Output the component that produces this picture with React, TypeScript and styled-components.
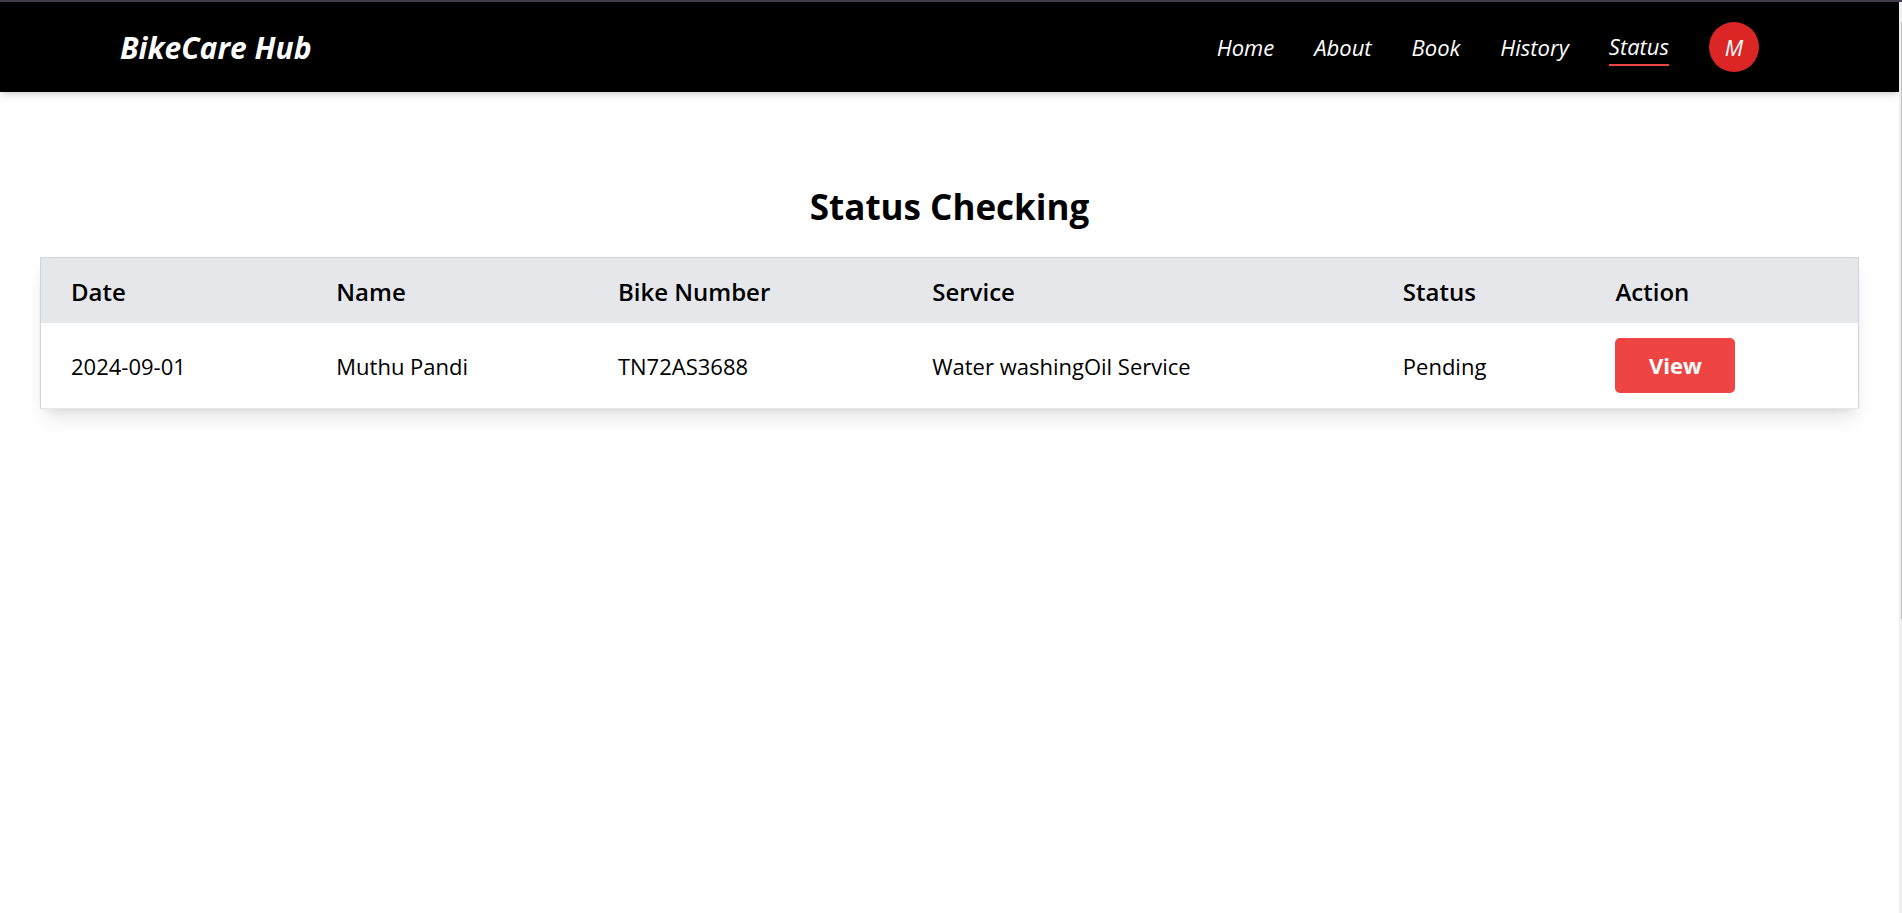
import React from "react";
import styled, { createGlobalStyle } from "styled-components";

const GlobalStyle = createGlobalStyle`
  *, *::before, *::after { box-sizing: border-box; }
  body {
    margin: 0;
    background: #ffffff;
    color: #000000;
    font-family: "Segoe UI", "Open Sans", "Noto Sans", sans-serif;
    font-size: 22px;
    line-height: 30px;
  }
`;

const Frame = styled.div`
  display: flex;
  min-height: 100vh;
  border-top: 2px solid #463c50;
`;

const Page = styled.div`
  flex: 1;
  min-width: 0;
`;

const ScrollTrack = styled.div`
  display: flex;
  justify-content: flex-end;
  width: 3px;
  padding-top: 20px;
  background: #f0f0f0;
`;

const ScrollThumb = styled.div`
  width: 1px;
  height: 67%;
  background: #c0c0c0;
`;

const Header = styled.header`
  display: flex;
  align-items: center;
  justify-content: space-between;
  height: 90px;
  padding: 0 140px 0 120px;
  background: #000000;
  color: #ffffff;
  font-style: italic;
  box-shadow: 0 5px 8px -1px rgba(0, 0, 0, 0.1), 0 3px 5px -2px rgba(0, 0, 0, 0.1);
`;

const Brand = styled.a`
  padding-top: 2px;
  color: inherit;
  font-size: 30px;
  font-weight: 700;
  line-height: 40px;
  text-decoration: none;
`;

const Nav = styled.nav`
  display: flex;
  align-items: center;
  gap: 40px;
`;

const NavLink = styled.a<{ $active?: boolean }>`
  color: inherit;
  line-height: 36px;
  text-decoration: none;
  border-bottom: ${(p) => (p.$active ? "2px solid #ef4444" : "0")};
`;

const Avatar = styled.button`
  width: 50px;
  height: 50px;
  padding: 0;
  border: 0;
  border-radius: 50%;
  background: #dc2626;
  color: #ffffff;
  font: inherit;
`;

const Main = styled.main`
  padding: 90px 40px;
`;

const Title = styled.h1`
  margin: 0 0 25px;
  font-size: 35px;
  font-weight: 700;
  line-height: 50px;
  text-align: center;
`;

const Table = styled.table`
  width: 100%;
  table-layout: fixed;
  border: 1px solid #d1d5db;
  border-bottom-color: #e5e7eb;
  border-spacing: 0;
  text-align: left;
  box-shadow: 0 12px 19px -4px rgba(0, 0, 0, 0.1), 0 5px 8px -5px rgba(0, 0, 0, 0.1);
`;

const Col = styled.col<{ $share: number }>`
  width: ${(p) => p.$share}%;
`;

const HeadCell = styled.th`
  height: 65px;
  padding: 2px 30px 0;
  background: #e5e7eb;
  font-size: 24px;
  font-weight: 600;
`;

const Cell = styled.td`
  padding: 15px 30px;
`;

const ViewButton = styled.button`
  display: block;
  width: 120px;
  height: 55px;
  padding: 0 0 2px;
  border: 0;
  border-radius: 5px;
  background: #ef4444;
  color: #ffffff;
  font: inherit;
  font-weight: 700;
`;

const links = ["Home", "About", "Book", "History", "Status"];

const columns = [
  { label: "Date", share: 14.6 },
  { label: "Name", share: 15.5 },
  { label: "Bike Number", share: 17.3 },
  { label: "Service", share: 25.9 },
  { label: "Status", share: 11.7 },
  { label: "Action", share: 15 },
];

const bookings = [
  {
    date: "2024-09-01",
    name: "Muthu Pandi",
    bike: "TN72AS3688",
    services: ["Water washing", "Oil Service"],
    status: "Pending",
  },
];

export default function App() {
  return (
    <Frame>
      <GlobalStyle />
      <Page>
        <Header>
          <Brand href="#">BikeCare Hub</Brand>
          <Nav>
            {links.map((label) => (
              <NavLink key={label} href="#" $active={label === "Status"}>
                {label}
              </NavLink>
            ))}
            <Avatar type="button">M</Avatar>
          </Nav>
        </Header>
        <Main>
          <Title>Status Checking</Title>
          <Table>
            <colgroup>
              {columns.map((c) => (
                <Col key={c.label} $share={c.share} />
              ))}
            </colgroup>
            <thead>
              <tr>
                {columns.map((c) => (
                  <HeadCell key={c.label} scope="col">
                    {c.label}
                  </HeadCell>
                ))}
              </tr>
            </thead>
            <tbody>
              {bookings.map((b) => (
                <tr key={b.bike}>
                  <Cell>{b.date}</Cell>
                  <Cell>{b.name}</Cell>
                  <Cell>{b.bike}</Cell>
                  <Cell>{b.services.join("")}</Cell>
                  <Cell>{b.status}</Cell>
                  <Cell>
                    <ViewButton type="button">View</ViewButton>
                  </Cell>
                </tr>
              ))}
            </tbody>
          </Table>
        </Main>
      </Page>
      <ScrollTrack>
        <ScrollThumb />
      </ScrollTrack>
    </Frame>
  );
}
